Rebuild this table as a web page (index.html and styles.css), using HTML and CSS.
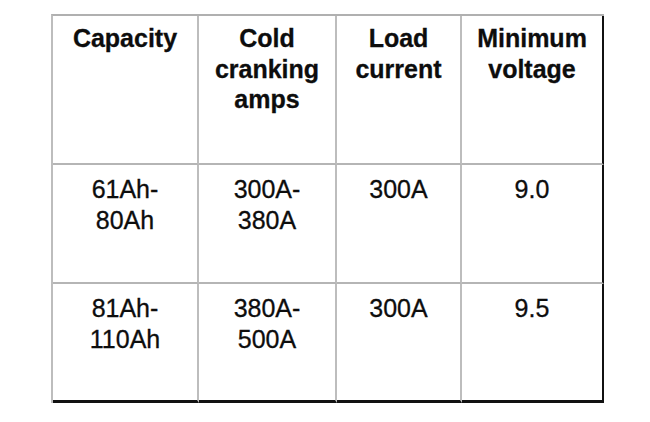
FILE: index.html
```html
<!DOCTYPE html>
<html lang="en">
<head>
    <meta charset="UTF-8">
    <meta name="viewport" content="width=device-width, initial-scale=1.0">
    <title>Battery Load Test</title>
    <link rel="stylesheet" href="styles.css">
</head>
<body>
    <div class="load-table">
        <div class="cell head">Capacity</div>
        <div class="cell head">Cold<br>cranking<br>amps</div>
        <div class="cell head">Load<br>current</div>
        <div class="cell head last-col">Minimum<br>voltage</div>

        <div class="cell">61Ah-<br>80Ah</div>
        <div class="cell">300A-<br>380A</div>
        <div class="cell">300A</div>
        <div class="cell last-col">9.0</div>

        <div class="cell last-row">81Ah-<br>110Ah</div>
        <div class="cell last-row">380A-<br>500A</div>
        <div class="cell last-row">300A</div>
        <div class="cell last-row last-col">9.5</div>
    </div>
</body>
</html>
```
FILE: styles.css
```css
body {
    margin: 0;
    background-color: #fff;
    color: #0d0d0d;
    font-family: "Liberation Sans", Arial, sans-serif;
}

.load-table {
    display: grid;
    grid-template-columns: 146px 138px 125px 142px;
    grid-template-rows: 149px 119px 119px;
    width: max-content;
    margin: 14px 0 0 51px;
    border-top: 2px solid #b0b0b0;
    border-left: 2px solid #bdbdbd;
}

.cell {
    box-sizing: border-box;
    padding: 9px 4px 0;
    border-right: 2px solid #bdbdbd;
    border-bottom: 2px solid #b5b5b5;
    font-size: 25px;
    line-height: 31px;
    text-align: center;
    -webkit-text-stroke: 0.3px #0d0d0d;
}

.cell.head {
    padding-top: 7px;
    font-weight: bold;
    line-height: 30.5px;
}

.cell.last-col {
    border-right-color: #111;
}

.cell.last-row {
    border-bottom-color: #111;
    border-bottom-width: 3px;
}
```
